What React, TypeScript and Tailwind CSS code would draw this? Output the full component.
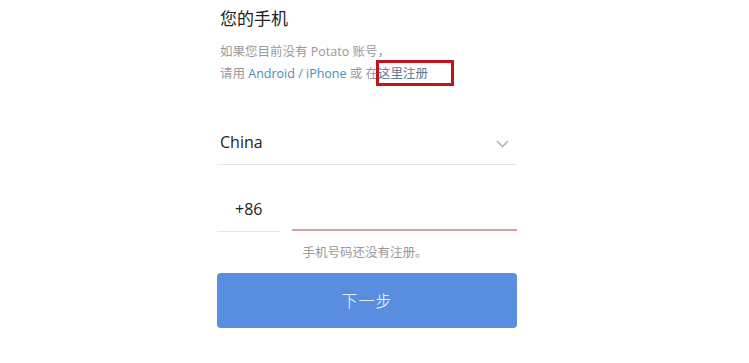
import React from 'react';

const font = { fontFamily: '"Open Sans", "Noto Sans CJK SC", sans-serif' };

export default function App() {
  return (
    <div className="w-[749px] h-[363px] bg-white overflow-hidden" style={font}>
      <div className="ml-[217px] w-[300px] flex flex-col">
        <h1 className="pl-[3px] pt-[7px] text-[17px] leading-[24px] text-[#222] font-normal">您的手机</h1>

        <div className="pl-[3px] mt-[10px] text-[12.5px] leading-[22px] text-[#999]">
          <p>如果您目前没有 Potato 账号，</p>
          <p>
            请用 <span className="text-[#4c8bb5]">Android / iPhone</span> 或 在
            <span className="relative text-[#5f7a90]">
              这里注册
              <span className="absolute -left-[2px] -top-[5px] w-[78px] h-[26px] border-[3px] border-[#c3141d]" />
            </span>
          </p>
        </div>

        <div className="mt-[46px] pb-[11px] flex items-center justify-between border-b border-[#e4e4e4] pl-[3px] pr-[8px]">
          <span className="text-[16px] leading-[22px] text-[#222]">China</span>
          <svg width="13" height="8" viewBox="0 0 13 8" fill="none" stroke="#b5b5b5" strokeWidth="1.6" className="mt-[3px]">
            <path d="M1 1l5.5 5.5L12 1" />
          </svg>
        </div>

        <div className="mt-[33px] flex items-end gap-[12px]">
          <div className="w-[63px] pb-[11px] pl-[18px] border-b border-[#e4e4e4] text-[16px] leading-[22px] text-[#222]">
            +86
          </div>
          <div className="flex-1 h-[32px] border-b-2 border-[#d7a1a3] mb-[1px]" />
        </div>

        <p className="mt-[10px] text-center text-[12.5px] leading-[22px] text-[#999] pr-[4px]">手机号码还没有注册。</p>

        <button className="mt-[9px] h-[55px] w-full rounded-[4px] bg-[#598ddf] text-white text-[16px] font-light tracking-[1px]">
          下一步
        </button>
      </div>
    </div>
  );
}
